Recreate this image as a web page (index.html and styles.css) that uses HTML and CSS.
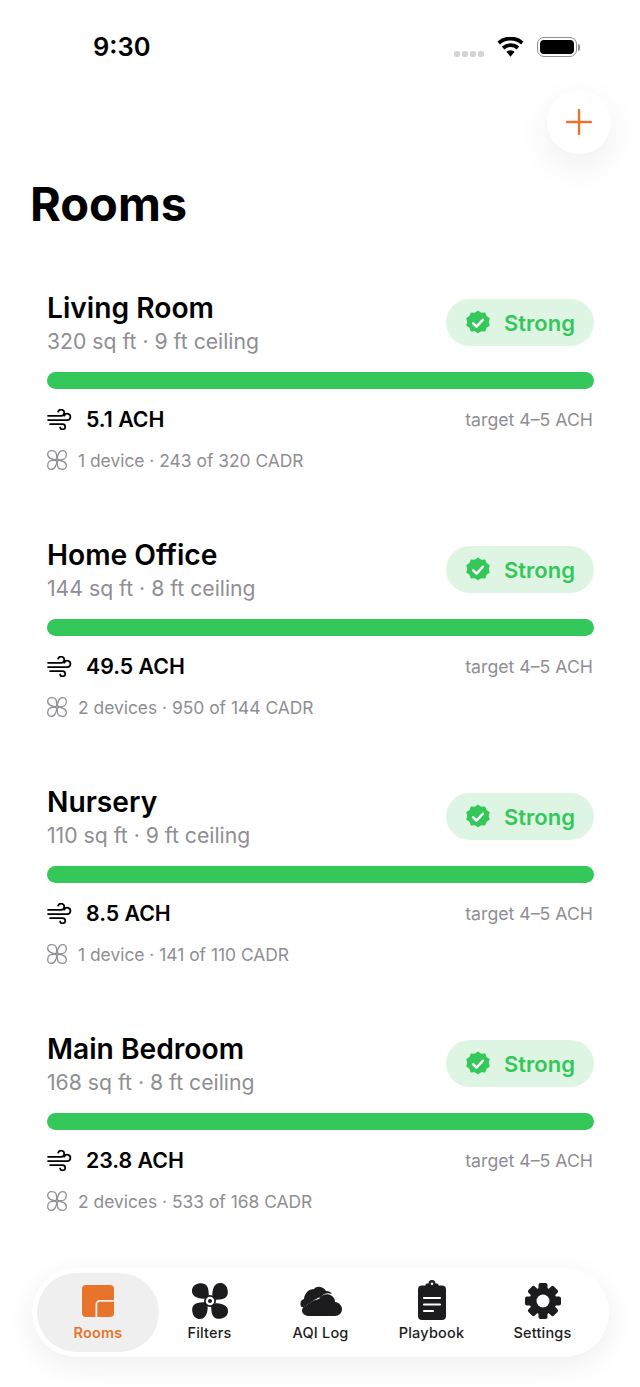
FILE: index.html
```html
<!DOCTYPE html>
<html lang="en">
<head>
    <meta charset="UTF-8">
    <meta name="viewport" content="width=device-width, initial-scale=1.0">
    <title>Rooms</title>
    <link rel="stylesheet" href="styles.css">
</head>
<body>
    <svg class="sprite" width="0" height="0" aria-hidden="true">
        <symbol id="wind" viewBox="0 0 24 20">
            <path d="M1 6.500h12.500a3 3 0 1 0-2.800-4M1 10.500h18.500a3 3 0 1 0-2.800-4.200M3 14.500h12a2.500 2.500 0 1 1-2.400 3.200" fill="none" stroke="currentColor" stroke-width="1.700" stroke-linecap="round"/>
        </symbol>
        <symbol id="petal" viewBox="0 0 20 20">
            <path d="M10 9.200C9.800 6.500 9.800 4 8.800 2.400 7.800.9 5.800.7 4.300.7 2.300.7.700 2.300.700 4.300c0 1.700 1 3.200 2.700 4 1.800.9 4 1.500 5.900 1.700"/>
        </symbol>
        <symbol id="fan-outline" viewBox="0 0 20 20">
            <g fill="none" stroke="currentColor" stroke-width="1.300">
                <use href="#petal" width="20" height="20"/>
                <use href="#petal" width="20" height="20" transform="rotate(90 10 10)"/>
                <use href="#petal" width="20" height="20" transform="rotate(180 10 10)"/>
                <use href="#petal" width="20" height="20" transform="rotate(270 10 10)"/>
                <circle cx="10" cy="10" r="1.300"/>
            </g>
        </symbol>
        <symbol id="blade" viewBox="0 0 36 36">
            <path d="M17 14.500C16.500 10 17 6 15 3 13 0 9.500-.2 6.500.5 2.500 1.300 0 4 0 8c0 4 3 6 6.500 7 3.500 1 7 1 10.500-.5z"/>
        </symbol>
        <symbol id="badge" viewBox="0 0 24 24">
            <path fill="currentColor" d="M12 .5l3 2 3.600-.3 1.300 3.400 3 2-1 3.400 1 3.400-3 2-1.300 3.400-3.600-.3-3 2-3-2-3.600.3-1.300-3.400-3-2 1-3.400-1-3.400 3-2 1.300-3.400 3.600.3z"/>
            <path d="M7.500 12.300l3.100 3.100 5.900-6.400" fill="none" stroke="#fff" stroke-width="2.300" stroke-linecap="round" stroke-linejoin="round"/>
        </symbol>
    </svg>

    <div class="status-bar">
        <span class="time">9:30</span>
        <div class="status-icons">
            <div class="signal"><i></i><i></i><i></i><i></i></div>
            <svg class="wifi" viewBox="0 0 28 20">
                <path fill="#000" d="M14 20l-4.300-5a6.300 6.300 0 0 1 8.600 0zM7.600 12.500L5 9.500a13.500 13.500 0 0 1 18 0l-2.600 3a9.500 9.500 0 0 0-12.800 0zM3 7.300L.5 4.300a20.500 20.500 0 0 1 27 0L25 7.300a16.700 16.700 0 0 0-22 0z"/>
            </svg>
            <div class="battery"><div class="battery-fill"></div></div>
            <div class="battery-cap"></div>
        </div>
    </div>

    <div class="top-row">
        <button class="add-btn" type="button">
            <svg viewBox="0 0 26 26" width="26" height="26">
                <path d="M13 1v24M1 13h24" stroke="#e8742c" stroke-width="2.400" stroke-linecap="round"/>
            </svg>
        </button>
    </div>

    <h1 class="page-title">Rooms</h1>

    <div class="room-list">
        <div class="room">
            <div class="room-head">
                <div>
                    <div class="room-name">Living Room</div>
                    <div class="room-size">320 sq ft · 9 ft ceiling</div>
                </div>
                <div class="pill"><svg class="pill-icon"><use href="#badge"/></svg>Strong</div>
            </div>
            <div class="bar"></div>
            <div class="ach-row">
                <svg class="wind-icon"><use href="#wind"/></svg>
                <span class="ach">5.1 ACH</span>
                <span class="target">target 4–5 ACH</span>
            </div>
            <div class="device-row">
                <svg class="fan-icon"><use href="#fan-outline"/></svg>
                1 device · 243 of 320 CADR
            </div>
        </div>

        <div class="room">
            <div class="room-head">
                <div>
                    <div class="room-name">Home Office</div>
                    <div class="room-size">144 sq ft · 8 ft ceiling</div>
                </div>
                <div class="pill"><svg class="pill-icon"><use href="#badge"/></svg>Strong</div>
            </div>
            <div class="bar"></div>
            <div class="ach-row">
                <svg class="wind-icon"><use href="#wind"/></svg>
                <span class="ach">49.5 ACH</span>
                <span class="target">target 4–5 ACH</span>
            </div>
            <div class="device-row">
                <svg class="fan-icon"><use href="#fan-outline"/></svg>
                2 devices · 950 of 144 CADR
            </div>
        </div>

        <div class="room">
            <div class="room-head">
                <div>
                    <div class="room-name">Nursery</div>
                    <div class="room-size">110 sq ft · 9 ft ceiling</div>
                </div>
                <div class="pill"><svg class="pill-icon"><use href="#badge"/></svg>Strong</div>
            </div>
            <div class="bar"></div>
            <div class="ach-row">
                <svg class="wind-icon"><use href="#wind"/></svg>
                <span class="ach">8.5 ACH</span>
                <span class="target">target 4–5 ACH</span>
            </div>
            <div class="device-row">
                <svg class="fan-icon"><use href="#fan-outline"/></svg>
                1 device · 141 of 110 CADR
            </div>
        </div>

        <div class="room">
            <div class="room-head">
                <div>
                    <div class="room-name">Main Bedroom</div>
                    <div class="room-size">168 sq ft · 8 ft ceiling</div>
                </div>
                <div class="pill"><svg class="pill-icon"><use href="#badge"/></svg>Strong</div>
            </div>
            <div class="bar"></div>
            <div class="ach-row">
                <svg class="wind-icon"><use href="#wind"/></svg>
                <span class="ach">23.8 ACH</span>
                <span class="target">target 4–5 ACH</span>
            </div>
            <div class="device-row">
                <svg class="fan-icon"><use href="#fan-outline"/></svg>
                2 devices · 533 of 168 CADR
            </div>
        </div>
    </div>

    <nav class="tab-bar">
        <a class="tab active">
            <svg class="tab-icon" viewBox="-3 -2 38 36">
                <path fill="#e8742c" d="M4 0h24a4 4 0 0 1 4 4v11H18a4.500 4.500 0 0 0-4.500 4.500V32H4a4 4 0 0 1-4-4V4a4 4 0 0 1 4-4z"/>
                <path fill="#e8742c" d="M18 16.800h14V28a4 4 0 0 1-4 4H15.300V19.500a2.700 2.700 0 0 1 2.700-2.700z"/>
            </svg>
            Rooms
        </a>
        <a class="tab">
            <svg class="tab-icon" viewBox="0 0 36 36">
                <g fill="#1c1c1e">
                    <use href="#blade" width="36" height="36"/>
                    <use href="#blade" width="36" height="36" transform="rotate(90 18 18)"/>
                    <use href="#blade" width="36" height="36" transform="rotate(180 18 18)"/>
                    <use href="#blade" width="36" height="36" transform="rotate(270 18 18)"/>
                    <circle cx="18" cy="18" r="6"/>
                </g>
                <circle cx="18" cy="18" r="4.300" fill="#fff"/>
                <circle cx="18" cy="18" r="2" fill="#1c1c1e"/>
            </svg>
            Filters
        </a>
        <a class="tab">
            <svg class="tab-icon" viewBox="0 0 42 30">
                <path fill="#1c1c1e" d="M1 20c-1.500-3 0-6 3-7 .5-6 5-10 10-10 1.500-2 5-3 8-1.500 2 1 3 2 4 3.500 3 0 5 1 6 3-5-2-9 0-11 3-4 1-9 4-14 8-2 2-4.500 3-6 1.500z"/>
                <path fill="#1c1c1e" d="M9 30c-4 0-7-2.500-7-5.500 0-2.500 2-4.500 4.500-5C10 16 14 14 19 13c2-3.500 6-5.500 10-4.500 4 1 6 4.500 6 7.500 4 .5 7 3.500 7 7 0 4-3 7-7 7z"/>
            </svg>
            AQI Log
        </a>
        <a class="tab">
            <svg class="tab-icon tab-icon-tall" viewBox="0 0 28 40">
                <path fill="#1c1c1e" d="M9 3.500h1.500a3.500 3.500 0 0 1 7 0H19a1.500 1.500 0 0 1 1.500 1.500v.5H24a4 4 0 0 1 4 4V36a4 4 0 0 1-4 4H4a4 4 0 0 1-4-4V9.500a4 4 0 0 1 4-4h3.500V5A1.500 1.500 0 0 1 9 3.500z"/>
                <circle cx="14" cy="3.800" r="1.300" fill="#fff"/>
                <path d="M6 18h16M6 24.500h16M6 31h9" stroke="#fff" stroke-width="2.200" stroke-linecap="round"/>
            </svg>
            Playbook
        </a>
        <a class="tab">
            <svg class="tab-icon" viewBox="0 0 36 36">
                <g fill="#1c1c1e">
                    <circle cx="18" cy="18" r="13.500"/>
                    <rect x="13.500" y="0" width="9" height="36" rx="2"/>
                    <rect x="13.500" y="0" width="9" height="36" rx="2" transform="rotate(45 18 18)"/>
                    <rect x="13.500" y="0" width="9" height="36" rx="2" transform="rotate(90 18 18)"/>
                    <rect x="13.500" y="0" width="9" height="36" rx="2" transform="rotate(135 18 18)"/>
                </g>
                <circle cx="18" cy="18" r="6.500" fill="#fff"/>
            </svg>
            Settings
        </a>
    </nav>
</body>
</html>
```

FILE: styles.css
```css
body {
    font-family: Inter, "Liberation Sans", sans-serif;
    margin: 0;
    padding: 0;
    width: 640px;
    height: 1387px;
    overflow: hidden;
    background-color: white;
    color: black;
    position: relative;
}

.sprite {
    position: absolute;
}

/* status bar */
.status-bar {
    height: 90px;
    box-sizing: border-box;
    padding: 32px 60px 0 93px;
    display: flex;
    justify-content: space-between;
    align-items: flex-start;
}

.time {
    font-size: 25.5px;
    font-weight: 600;
    line-height: 30px;
}

.status-icons {
    display: flex;
    align-items: center;
    height: 30px;
}

.signal {
    display: flex;
    gap: 2px;
    margin-top: 14px;
    margin-right: 13px;
}

.signal i {
    width: 6px;
    height: 6px;
    border-radius: 2px;
    background-color: #d4d4d6;
}

.wifi {
    width: 27px;
    height: 20px;
    margin-right: 13px;
}

.battery {
    width: 40px;
    height: 20px;
    border: 1.5px solid #8e8e93;
    border-radius: 7px;
    padding: 2px;
    box-sizing: border-box;
}

.battery-fill {
    width: 100%;
    height: 100%;
    background-color: black;
    border-radius: 4px;
}

.battery-cap {
    width: 2px;
    height: 7px;
    margin-left: 1px;
    background-color: #8e8e93;
    border-radius: 0 2px 2px 0;
}

/* header */
.top-row {
    display: flex;
    justify-content: flex-end;
    padding-right: 29px;
}

.add-btn {
    width: 64px;
    height: 64px;
    border: none;
    border-radius: 50%;
    background-color: white;
    box-shadow: 0 12px 36px rgba(0, 0, 0, 0.07);
    display: flex;
    align-items: center;
    justify-content: center;
    padding: 0;
}

.page-title {
    margin: 22px 0 0 30px;
    font-size: 47px;
    font-weight: 700;
    line-height: 56px;
}

/* rooms */
.room-list {
    padding: 0 46px 0 47px;
    margin-top: 59px;
    display: flex;
    flex-direction: column;
    gap: 35px;
}

.room {
    height: 212px;
}

.room-head {
    display: flex;
    justify-content: space-between;
    align-items: flex-start;
}

.room-name {
    font-size: 28.2px;
    font-weight: 600;
    line-height: 34px;
}

.room-size {
    font-size: 21.2px;
    color: #8e8e93;
    line-height: 32px;
}

.pill {
    width: 148px;
    height: 47px;
    margin-top: 8px;
    box-sizing: border-box;
    padding-left: 19px;
    display: flex;
    align-items: center;
    gap: 13px;
    border-radius: 24px;
    background-color: #def5e3;
    color: #34c759;
    font-size: 22px;
    font-weight: 600;
}

.pill-icon {
    width: 26px;
    height: 26px;
}

.bar {
    height: 17px;
    margin-top: 15px;
    border-radius: 9px;
    background-color: #34c759;
}

.ach-row {
    display: flex;
    align-items: center;
    margin-top: 14px;
    height: 32px;
}

.wind-icon {
    width: 25px;
    height: 21px;
    margin-right: 14px;
}

.ach {
    font-size: 21.3px;
    font-weight: 600;
}

.target {
    margin-left: auto;
    margin-right: 1px;
    font-size: 17.7px;
    color: #8e8e93;
}

.device-row {
    display: flex;
    align-items: center;
    gap: 11px;
    margin-top: 9px;
    height: 32px;
    font-size: 17.4px;
    color: #8e8e93;
}

.fan-icon {
    width: 20px;
    height: 20px;
}

/* tab bar, floats over the list */
.tab-bar {
    position: absolute;
    left: 32px;
    top: 1268px;
    width: 577px;
    height: 89px;
    box-sizing: border-box;
    padding: 5px 10px 5px 11px;
    display: grid;
    grid-template-columns: repeat(5, 111px);
    background-color: white;
    border-radius: 45px;
    box-shadow: 0 8px 30px rgba(0, 0, 0, 0.07);
}

.tab {
    display: flex;
    flex-direction: column;
    align-items: center;
    justify-content: flex-end;
    padding-bottom: 11px;
    border-radius: 40px;
    font-size: 14.5px;
    font-weight: 500;
    color: #1c1c1e;
    letter-spacing: 0.2px;
}

.tab.active {
    margin: 0 -5px 0 -6px;
    background-color: #efefef;
    color: #e8742c;
    font-weight: 600;
}

.tab-icon {
    height: 36px;
    width: 42px;
    margin-bottom: 5px;
}

.tab-icon-tall {
    height: 40px;
    margin-bottom: 4px;
}
```
